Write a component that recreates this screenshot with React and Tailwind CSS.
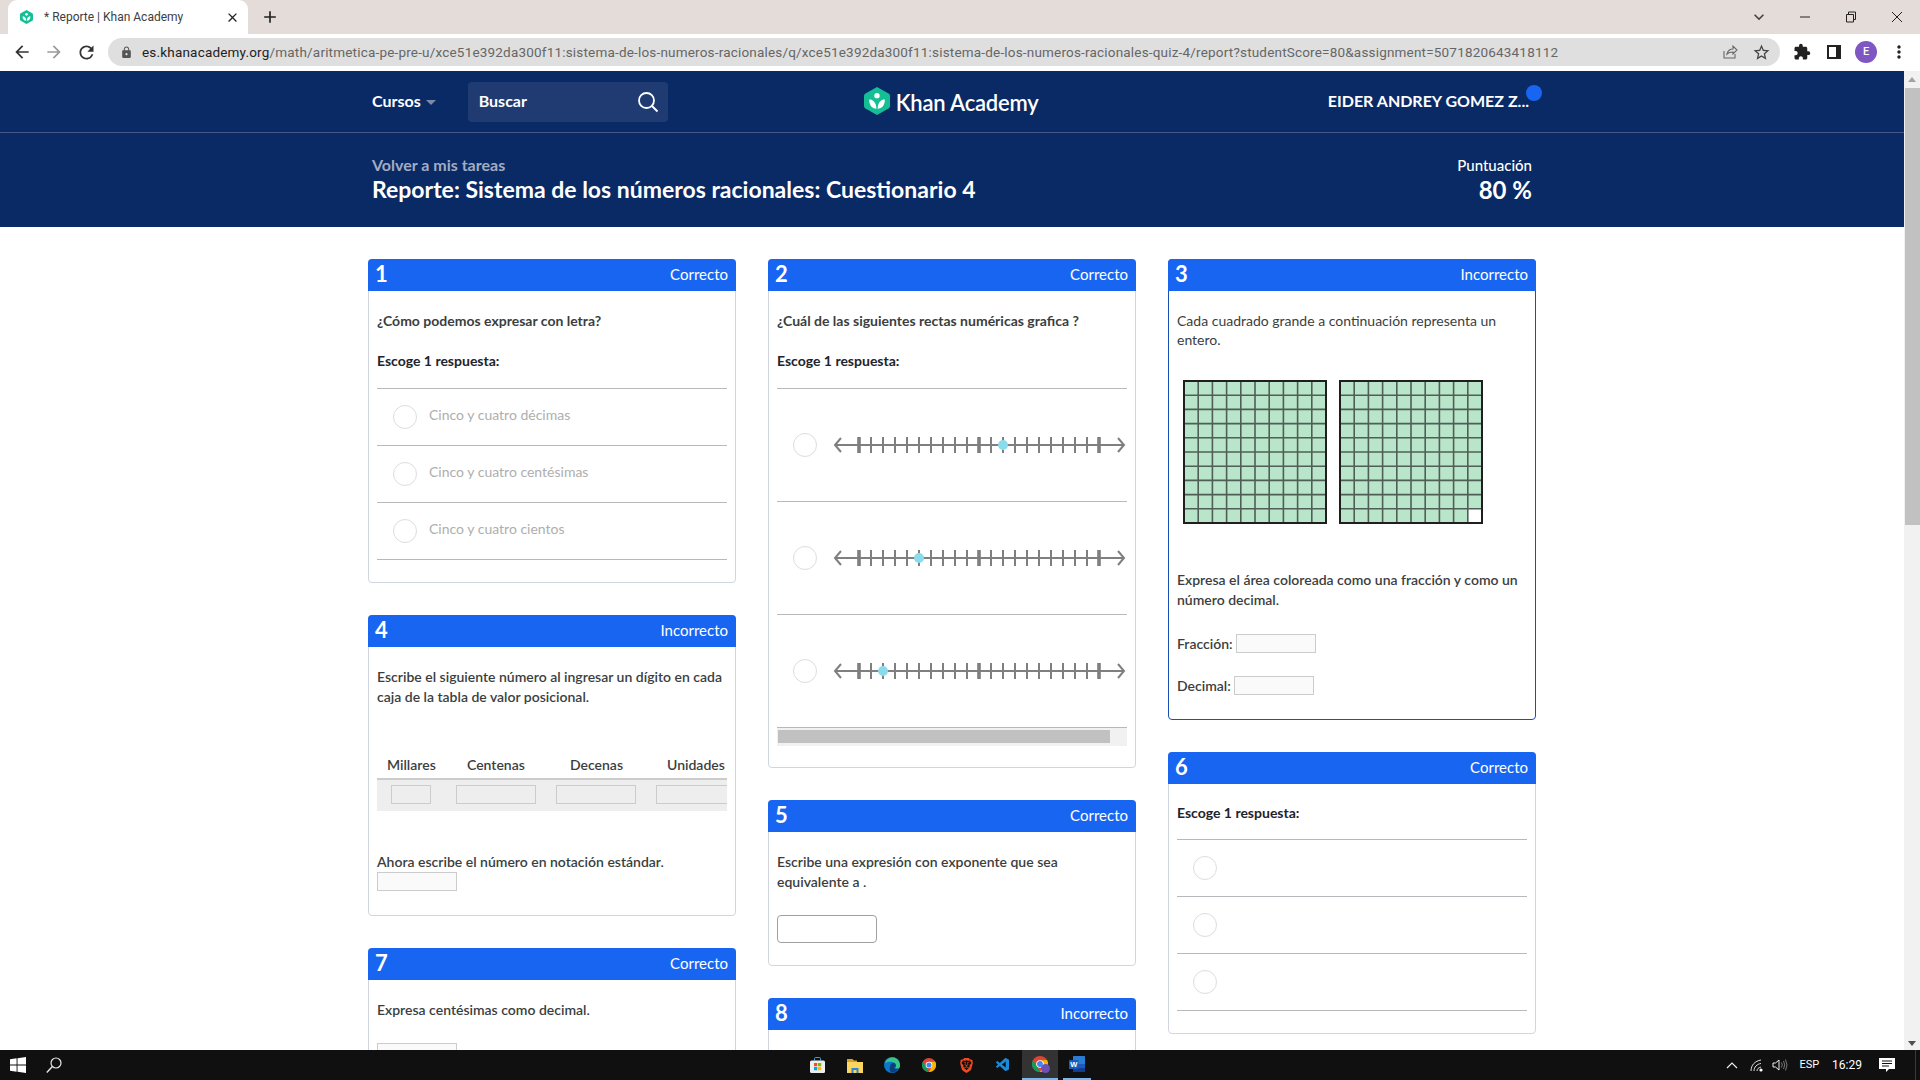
import React from "react";
import { MdArrowBack, MdArrowForward, MdRefresh, MdLock, MdStarBorder, MdMoreVert, MdExtension, MdClose, MdAdd, MdExpandMore } from "react-icons/md";
import { SiBrave } from "react-icons/si";
import { VscVscode } from "react-icons/vsc";

const URL_HOST = "es.khanacademy.org";
const URL_REST = "/math/aritmetica-pe-pre-u/xce51e392da300f11:sistema-de-los-numeros-racionales/q/xce51e392da300f11:sistema-de-los-numeros-racionales-quiz-4/report?studentScore=80&assignment=5071820643418112";

function KhanLogo({ size, className }) {
  return (
    <svg width={size} height={size * 1.08} viewBox="0 0 26 28" className={className}>
      <path d="M13 0 L24.5 6.5 Q26 7.4 26 9 L26 19 Q26 20.6 24.5 21.5 L13 28 L1.5 21.5 Q0 20.6 0 19 L0 9 Q0 7.4 1.5 6.5 Z" fill="#14bf96" />
      <circle cx="13" cy="8.6" r="2.7" fill="#fff" />
      <path d="M5.2 12.4 C9 12.4 12.2 15 12.4 21.6 C8 21.4 5 18 5.2 12.4 Z" fill="#fff" />
      <path d="M20.8 12.4 C17 12.4 13.8 15 13.6 21.6 C18 21.4 21 18 20.8 12.4 Z" fill="#fff" />
    </svg>
  );
}

function ChromeIcon({ size = 15 }) {
  return (
    <svg width={size} height={size} viewBox="0 0 32 32">
      <circle cx="16" cy="16" r="16" fill="#db4437" />
      <path d="M16 32 A16 16 0 0 1 2.1 8 L10 21 Z" fill="#0f9d58" />
      <path d="M16 32 A16 16 0 0 0 30 8 L16 9 L22 20 Z" fill="#f4b400" />
      <circle cx="16" cy="16" r="7.6" fill="#fff" />
      <circle cx="16" cy="16" r="5.8" fill="#4285f4" />
    </svg>
  );
}

function EdgeIcon() {
  return (
    <svg width="16" height="16" viewBox="0 0 32 32">
      <circle cx="16" cy="16" r="16" fill="#0c78c8" />
      <path d="M2 13 C4 3 14 0 20 1 C28 3 32 10 32 18 C32 23 26 24 22 22 C26 18 24 11 17 10 C10 9 4 10 2 13 Z" fill="#37c684" />
      <path d="M13 17 C13 12 19 11 22 13 C25 16 24 21 20 22 C24 25 27 24 29 23 C26 29 20 32 15 31 C10 29 11 21 13 17 Z" fill="#0b3f7d" />
    </svg>
  );
}

function StoreIcon() {
  return (
    <svg width="15" height="16" viewBox="0 0 30 32">
      <path d="M9 7 V3 Q9 1 11 1 H19 Q21 1 21 3 V7" fill="none" stroke="#2aa8e0" strokeWidth="2" />
      <rect x="0" y="7" width="30" height="25" rx="3" fill="#eeeeee" />
      <rect x="8" y="12" width="6.5" height="6.5" fill="#f25022" />
      <rect x="16" y="12" width="6.5" height="6.5" fill="#7fba00" />
      <rect x="8" y="20" width="6.5" height="6.5" fill="#00a4ef" />
      <rect x="16" y="20" width="6.5" height="6.5" fill="#ffb900" />
    </svg>
  );
}

function FolderIcon() {
  return (
    <svg width="16" height="15" viewBox="0 0 32 30">
      <path d="M0 2 H11 L14 5 H20 V10 H0 Z" fill="#d9a11f" />
      <rect x="0" y="8" width="32" height="22" fill="#fbd560" />
      <path d="M9 30 V20 H23 V30 H19 V24 H13 V30 Z" fill="#2f86c9" />
    </svg>
  );
}

function WordIcon() {
  return (
    <svg width="16" height="16" viewBox="0 0 32 32">
      <rect x="8" y="0" width="24" height="32" rx="1" fill="#2b7cd3" />
      <rect x="8" y="16" width="24" height="8" fill="#185abd" />
      <rect x="8" y="24" width="24" height="8" fill="#103f91" />
      <rect x="0" y="8" width="19" height="18" rx="1" fill="#185abd" />
      <text x="9.5" y="22.5" fontSize="15" fontWeight="700" fill="#fff" textAnchor="middle" fontFamily="Liberation Sans, sans-serif">W</text>
    </svg>
  );
}

function NumberLine({ dot }) {
  const ticks = Array.from({ length: 21 }, (_, i) => i);
  return (
    <svg width="295" height="24" viewBox="0 0 295 24" className="ml-[15px] shrink-0">
      <line x1="3" y1="12" x2="292" y2="12" stroke="#7f7f7f" strokeWidth="2" />
      <path d="M9 5 L3 12 L9 19" fill="none" stroke="#7f7f7f" strokeWidth="2" />
      <path d="M286 5 L292 12 L286 19" fill="none" stroke="#7f7f7f" strokeWidth="2" />
      {ticks.map((i) => (
        <line key={i} x1={27 + 12 * i} x2={27 + 12 * i} y1="4" y2="20" stroke="#7f7f7f" strokeWidth={i % 10 === 0 ? 3.6 : 2} />
      ))}
      <circle cx={27 + 12 * dot} cy="12" r="5" fill="#8adcec" />
    </svg>
  );
}

function HundredGrid({ missing }) {
  const p = 142 / 10;
  const idx = Array.from({ length: 11 }, (_, i) => i);
  return (
    <svg width="144" height="144" viewBox="0 0 144 144">
      <rect x="1" y="1" width="142" height="142" fill="#b9e5ca" />
      {missing && <rect x={1 + 9 * p} y={1 + 9 * p} width={p} height={p} fill="#fff" />}
      {idx.map((i) => (
        <g key={i}>
          <line x1={1 + i * p} x2={1 + i * p} y1="1" y2="143" stroke="#4f5f55" strokeWidth="1.6" />
          <line y1={1 + i * p} y2={1 + i * p} x1="1" x2="143" stroke="#4f5f55" strokeWidth="1.6" />
        </g>
      ))}
      <rect x="1" y="1" width="142" height="142" fill="none" stroke="#1f1f1f" strokeWidth="2" />
    </svg>
  );
}

function Card({ n, status, active, children, className = "" }) {
  return (
    <section className={"rounded-[4px] border bg-white " + (active ? "border-[#1b50b3] " : "border-[#d0d5de] ") + className}>
      <header className="-mx-px -mt-px flex h-8 items-start justify-between rounded-t-[4px] bg-[#1865f2] pl-[7px] pr-2 text-white">
        <span className="w-[20px] text-[22px] font-bold leading-[30px]">{n}</span>
        <span className="text-[15px] leading-[30px]">{status}</span>
      </header>
      <div className="px-2">{children}</div>
    </section>
  );
}

function Radio({ className = "" }) {
  return <span className={"block size-6 shrink-0 rounded-full border border-[#dddddd] bg-white " + className} />;
}

function Options({ items, className = "" }) {
  return (
    <div className={"border-t border-[#b8b8bc] " + className}>
      {items.map((t, i) => (
        <div key={i} className="flex h-[57px] items-center border-b border-[#b8b8bc] pl-4">
          <Radio />
          {t && <span className="relative -top-[2px] ml-3 text-[14px] leading-5 text-[#aeaeae]">{t}</span>}
        </div>
      ))}
    </div>
  );
}

const Q = "text-[14px] font-semibold leading-5 text-[#3b3e40]";
const Q_STRONG = "text-[14px] font-bold leading-5 text-[#3b3e40]";
const TINY = "block h-[19px] w-20 shrink-0 border border-[#cccccc] bg-[#fafafa]";

function Browser() {
  return (
    <div className="font-[family-name:Roboto,sans-serif]">
      <div className="flex h-[34px] items-center bg-[#e4dcd9] pl-2 text-[#222]">
        <div className="flex h-[34px] w-[240px] items-center rounded-t-[9px] bg-white pl-3 pr-[8px]">
          <KhanLogo size={13} />
          <span className="ml-[11px] flex-1 text-[12px] text-[#3c4043]">* Reporte | Khan Academy</span>
          <MdClose size={15} className="text-[#222]" />
        </div>
        <MdAdd size={20} className="ml-3 text-[#222]" />
        <div className="flex-1" />
        <MdExpandMore size={20} className="text-[#444]" />
        <svg width="12" height="12" viewBox="0 0 12 12" className="ml-[30px]"><path d="M1 6 H11" stroke="#222" strokeWidth="1" /></svg>
        <svg width="12" height="12" viewBox="0 0 12 12" className="ml-[34px]"><path d="M1.5 3.5 H8.5 V11 H1.5 Z M3.5 3.5 V1 H10.5 V8.5 H8.5" fill="none" stroke="#222" strokeWidth="1" /></svg>
        <svg width="12" height="12" viewBox="0 0 12 12" className="ml-[34px] mr-[17px]"><path d="M1 1 L11 11 M11 1 L1 11" stroke="#222" strokeWidth="1" /></svg>
      </div>
      <div className="flex h-[37px] items-center bg-white pb-[1px] pl-[12px]">
        <MdArrowBack size={20} className="text-[#333]" />
        <MdArrowForward size={20} className="ml-3 text-[#9a9a9a]" />
        <MdRefresh size={21} className="ml-[12px] text-[#333]" />
        <div className="ml-[11px] flex h-7 w-[1672px] items-center rounded-full bg-[#dfdfdf] pl-[12px]">
          <MdLock size={13} className="text-[#555]" />
          <span className="ml-[9px] whitespace-nowrap text-[13.5px] tracking-[0.19px] text-[#666]">
            <span className="text-[#222]">{URL_HOST}</span>{URL_REST}
          </span>
          <div className="flex-1" />
          <svg width="16" height="16" viewBox="0 0 16 16" className="mr-[14px]"><path d="M2 7 V14 H13 V10 M5 10 C6 6 9 5 11 5 V2 L15 6 L11 10 V8 C9 8 7 8 5 10 Z" fill="none" stroke="#666" strokeWidth="1.1" /></svg>
          <MdStarBorder size={19} className="mr-[9px] text-[#444]" />
        </div>
        <MdExtension size={18} className="ml-[13px] text-[#222]" />
        <svg width="14" height="14" viewBox="0 0 14 14" className="ml-[16px]"><rect x="1" y="1" width="12" height="12" fill="#fff" stroke="#222" strokeWidth="2" /><rect x="9" y="1" width="4" height="12" fill="#222" /></svg>
        <span className="ml-[14px] flex size-[22px] items-center justify-center rounded-full bg-[#7e57c2] text-[11px] font-medium text-white">E</span>
        <MdMoreVert size={20} className="ml-[12px] text-[#222]" />
      </div>
    </div>
  );
}

function Page() {
  return (
    <main className="h-full min-w-0 flex-1 overflow-hidden bg-white font-[family-name:Lato,sans-serif]">
      <div className="bg-[#0a2a66]">
        <nav className="h-[62px] border-b border-[#47598a]">
          <div className="mx-auto flex h-[61px] w-[1160px] items-center text-white">
            <span className="pb-[2px] text-[16px] font-bold">Cursos</span>
            <span className="ml-[5px] mt-[2px] size-0 border-x-[5px] border-t-[5px] border-x-transparent border-t-[#7c8aa8]" />
            <div className="ml-[32px] flex h-10 w-[200px] items-center justify-between rounded-[4px] bg-[#1f3b72] pl-[11px] pr-[9px]">
              <span className="pb-[2px] text-[16px] font-bold">Buscar</span>
              <svg width="22" height="22" viewBox="0 0 22 22"><circle cx="9.5" cy="9.5" r="7.5" fill="none" stroke="#fff" strokeWidth="1.8" /><path d="M15 15 L20.5 20.5" stroke="#fff" strokeWidth="2" /></svg>
            </div>
            <div className="ml-[196px] flex items-center">
              <KhanLogo size={26} />
              <span className="ml-[6px] pt-[2px] text-[22px] font-semibold leading-7 tracking-[-0.2px]">Khan Academy</span>
            </div>
            <div className="relative ml-auto mr-[3px] pb-[2px]">
              <span className="text-[16px] font-bold">EIDER ANDREY GOMEZ Z...</span>
              <span className="absolute -right-[13px] -top-[4px] size-4 rounded-full bg-[#1865f2]" />
            </div>
          </div>
        </nav>
        <div className="mx-auto flex h-[94px] w-[1160px] items-start justify-between pt-[22px] text-white">
          <div>
            <div className="text-[16px] font-bold leading-5 text-[#a3adc2]">Volver a mis tareas</div>
            <div className="-mt-[1px] text-[23px] font-bold leading-[30px]">Reporte: Sistema de los números racionales: Cuestionario 4</div>
          </div>
          <div className="text-right">
            <div className="text-[15px] font-medium leading-5">Puntuación</div>
            <div className="text-[24px] font-bold leading-[30px]">80 %</div>
          </div>
        </div>
      </div>

      <div className="mx-auto mt-8 flex w-[1168px] items-start gap-8">
        <div className="flex w-[368px] flex-col gap-8">
          <Card n="1" status="Correcto">
            <p className={Q_STRONG + " pt-[20px]"}>¿Cómo podemos expresar con letra?</p>
            <p className={Q_STRONG + " mt-5 text-[#21242c]"}>Escoge 1 respuesta:</p>
            <Options className="mt-[17px]" items={["Cinco y cuatro décimas", "Cinco y cuatro centésimas", "Cinco y cuatro cientos"]} />
            <div className="h-[22px]" />
          </Card>
          <Card n="4" status="Incorrecto">
            <p className={Q + " pt-[20px]"}>Escribe el siguiente número al ingresar un dígito en cada caja de la tabla de valor posicional.</p>
            <div className="mt-[48px] overflow-hidden">
              <div className="flex h-[21px] items-start text-[14px] font-semibold leading-5 text-[#3b3e40]">
                <span className="ml-[10px] w-[49px]">Millares</span>
                <span className="ml-[31px] w-[58px]">Centenas</span>
                <span className="ml-[45px] w-[53px]">Decenas</span>
                <span className="ml-[44px] w-[58px]">Unidades</span>
              </div>
              <div className="mt-[2px] flex h-[33px] items-start border-t-2 border-[#cccccc] bg-[#eeeeee] pl-[14px] pt-[5px]">
                <span className="block h-[19px] w-10 shrink-0 border border-[#cccccc] bg-[#eeeeee]" />
                <span className="ml-[25px] block h-[19px] w-20 shrink-0 border border-[#cccccc] bg-[#eeeeee]" />
                <span className="ml-[20px] block h-[19px] w-20 shrink-0 border border-[#cccccc] bg-[#eeeeee]" />
                <span className="ml-[20px] block h-[19px] w-20 shrink-0 border border-[#cccccc] bg-[#eeeeee]" />
              </div>
            </div>
            <p className={Q + " mt-[41px]"}>Ahora escribe el número en notación estándar.</p>
            <span className={TINY} />
            <div className="h-6" />
          </Card>
          <Card n="7" status="Correcto">
            <p className={Q + " pt-[20px]"}>Expresa centésimas como decimal.</p>
            <span className={TINY + " mt-[23px]"} />
            <div className="h-6" />
          </Card>
        </div>

        <div className="flex w-[368px] flex-col gap-8">
          <Card n="2" status="Correcto">
            <p className={Q_STRONG + " pt-[20px]"}>¿Cuál de las siguientes rectas numéricas grafica ?</p>
            <p className={Q_STRONG + " mt-5 text-[#21242c]"}>Escoge 1 respuesta:</p>
            <div className="mt-[17px] border-t border-[#b8b8bc]">
              {[12, 5, 2].map((d) => (
                <div key={d} className="flex h-[113px] items-center border-b border-[#b8b8bc] pl-4">
                  <Radio />
                  <NumberLine dot={d} />
                </div>
              ))}
            </div>
            <div className="h-[18px] bg-[#f1f1f1] py-[2px] pl-[1px]">
              <div className="h-[13px] w-[332px] bg-[#c1c1c1]" />
            </div>
            <div className="h-[21px]" />
          </Card>
          <Card n="5" status="Correcto">
            <p className={Q + " pt-[20px]"}>Escribe una expresión con exponente que sea equivalente a .</p>
            <span className="mt-[23px] block h-7 w-[100px] rounded-[4px] border border-[#a0a0a0] bg-white" />
            <div className="h-[22px]" />
          </Card>
          <Card n="8" status="Incorrecto">
            <div className="h-20" />
          </Card>
        </div>

        <div className="flex w-[368px] flex-col gap-8">
          <Card n="3" status="Incorrecto" active>
            <p className="pt-[20px] text-[14px] font-normal leading-[19px] text-[#3b3e40]">Cada cuadrado grande a continuación representa un entero.</p>
            <div className="mt-[31px] flex gap-3 pl-[6px]">
              <HundredGrid />
              <HundredGrid missing />
            </div>
            <p className={Q + " mt-[46px]"}>Expresa el área coloreada como una fracción y como un número decimal.</p>
            <div className="mt-[24px] flex h-[19px] items-center">
              <span className={Q + " mr-[3px]"}>Fracción:</span>
              <span className={TINY} />
            </div>
            <div className="mt-[23px] flex h-[19px] items-center">
              <span className={Q + " mr-[3px]"}>Decimal:</span>
              <span className={TINY} />
            </div>
            <div className="h-[24px]" />
          </Card>
          <Card n="6" status="Correcto">
            <p className={Q_STRONG + " pt-[19px] text-[#21242c]"}>Escoge 1 respuesta:</p>
            <Options className="mt-4" items={["", "", ""]} />
            <div className="h-[22px]" />
          </Card>
        </div>
      </div>
    </main>
  );
}

function Scrollbar() {
  return (
    <aside className="flex h-full w-4 shrink-0 flex-col bg-[#f1f1f1]">
      <div className="flex h-[17px] items-center justify-center">
        <span className="size-0 border-x-[4px] border-b-[5px] border-x-transparent border-b-[#a3a3a3]" />
      </div>
      <div className="ml-[1px] h-[437px] bg-[#c1c1c1]" />
      <div className="flex-1" />
      <div className="flex h-[14px] items-center justify-center">
        <span className="size-0 border-x-[4px] border-t-[5px] border-x-transparent border-t-[#505050]" />
      </div>
    </aside>
  );
}

function Taskbar() {
  return (
    <footer className="flex h-[30px] shrink-0 items-center bg-[#101010] font-[family-name:Roboto,sans-serif] text-[12px] text-white">
      <svg width="16" height="16" viewBox="0 0 16 16" className="ml-[10px]"><path d="M0 2.3 L6.6 1.3 V7.6 H0 Z M7.5 1.2 L16 0 V7.6 H7.5 Z M0 8.4 H6.6 V14.7 L0 13.7 Z M7.5 8.4 H16 V16 L7.5 14.8 Z" fill="#fff" /></svg>
      <svg width="16" height="16" viewBox="0 0 16 16" className="ml-[20px]"><circle cx="10" cy="6" r="5" fill="none" stroke="#e6e6e6" strokeWidth="1.2" /><path d="M6.4 9.6 L0.8 15.4" stroke="#e6e6e6" strokeWidth="1.4" /></svg>
      <div className="ml-[748px] flex h-full items-center">
        <StoreIcon />
        <span className="ml-[22px] flex"><FolderIcon /></span>
        <span className="ml-[21px] flex"><EdgeIcon /></span>
        <span className="ml-[22px] flex"><ChromeIcon size={14} /></span>
        <SiBrave size={15} className="ml-[23px] text-[#f0481f]" />
        <VscVscode size={16} className="ml-[21px] text-[#1b8ad9]" />
        <div className="relative ml-[11px] flex h-full w-[36px] items-center justify-center border-b-[2px] border-[#76b9ed] bg-[#333333]">
          <ChromeIcon size={16} />
          <span className="absolute left-[19px] top-[14px] size-[9px] rounded-full bg-[#6b4fbb]" />
        </div>
        <div className="ml-[5px] flex h-full w-[28px] items-center justify-center border-b-[2px] border-[#76b9ed]">
          <WordIcon />
        </div>
      </div>
      <div className="ml-auto flex h-full items-center">
        <svg width="12" height="8" viewBox="0 0 12 8"><path d="M1 7 L6 2 L11 7" fill="none" stroke="#eee" strokeWidth="1.2" /></svg>
        <svg width="13" height="13" viewBox="0 0 13 13" className="ml-[12px]"><path d="M1 12 C1 6 5 2 11 1 M4 12 C4 8 7 5 11 4.5 M7 12 C7 10 8.5 8.5 11 8" fill="none" stroke="#ddd" strokeWidth="1" /><circle cx="11" cy="11" r="1.6" fill="#fff" /></svg>
        <svg width="16" height="14" viewBox="0 0 16 14" className="ml-[9px]"><path d="M1 5 H3.5 L7 2 V12 L3.5 9 H1 Z" fill="none" stroke="#eee" strokeWidth="1" /><path d="M9.5 4.5 Q11 7 9.5 9.5 M11.5 3 Q14 7 11.5 11 M13.5 1.5 Q16.5 7 13.5 12.5" fill="none" stroke="#777" strokeWidth="1" /></svg>
        <span className="ml-[11px] text-[11px]">ESP</span>
        <span className="ml-[13px]">16:29</span>
        <svg width="16" height="15" viewBox="0 0 16 15" className="ml-[17px]"><path d="M0 0 H16 V11 H10 L7 14 V11 H0 Z" fill="#fff" /><path d="M3 3 H13 M3 5.5 H13 M3 8 H10" stroke="#101010" strokeWidth="1" /></svg>
        <span className="ml-[20px] mr-[4px] h-full w-px bg-[#3a3a3a]" />
      </div>
    </footer>
  );
}

export default function App() {
  return (
    <div className="flex h-screen w-full flex-col overflow-hidden bg-white">
      <Browser />
      <div className="flex min-h-0 flex-1">
        <Page />
        <Scrollbar />
      </div>
      <Taskbar />
    </div>
  );
}
